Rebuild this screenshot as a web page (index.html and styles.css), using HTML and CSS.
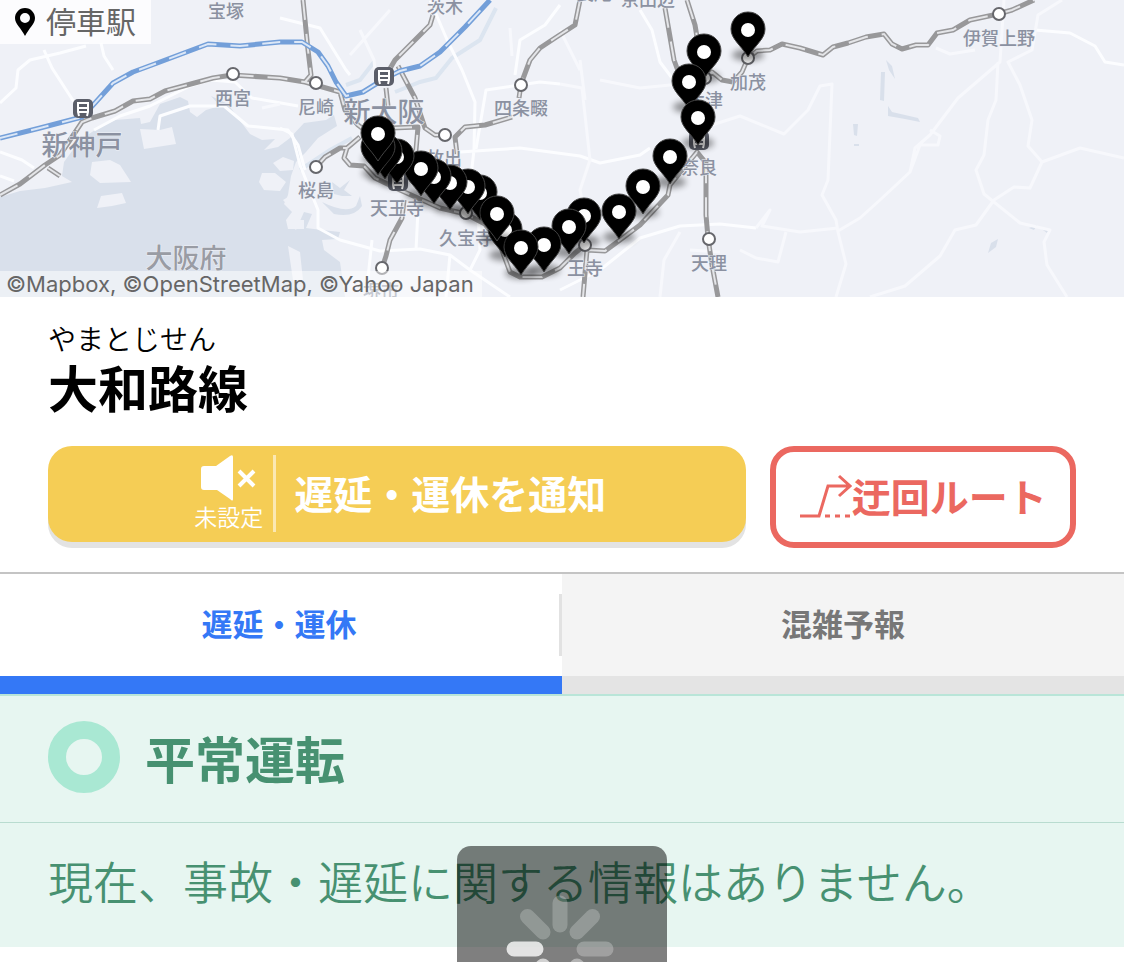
FILE: index.html
```html
<!DOCTYPE html>
<html lang="ja">
<head>
<meta charset="utf-8">
<meta name="viewport" content="width=device-width, initial-scale=1">
<title>大和路線 運行情報</title>
<link rel="stylesheet" href="styles.css">
</head>
<body>
<div class="page">
  <section class="map">
    <svg class="map-canvas" viewBox="0 0 1124 297" preserveAspectRatio="xMidYMid slice" role="img" aria-label="停車駅の地図">
      <defs>
        <filter id="soft" x="-50%" y="-50%" width="200%" height="200%"><feGaussianBlur stdDeviation="3"/></filter>
        <g id="pin">
          <ellipse class="pin-shadow" cx="0" cy="25" rx="16" ry="6"/>
          <path class="pin-body" d="M0-18C-10-18-17-10-17-1C-17 9-8 14 0 27C8 14 17 9 17-1C17-10 10-18 0-18Z"/>
          <circle class="pin-hole" r="7"/>
        </g>
        <circle id="stop" r="6"/>
        <g id="hub">
          <rect class="hub-box" x="-10" y="-10" width="20" height="19" rx="5"/>
          <path class="hub-train" d="M-4 7L-5 3V-6H5V3L4 7M-5-1H5M-5 3H5"/>
        </g>
      </defs>

      <g class="water">
        <path d="M0 197L20 191L45 188L72 182L62 176L64 162L80 140L95 130L115 120L140 118L141 124L150 122L155 113L160 104L180 97L188 101L190 112L197 117L206 110L220 106L211 96L228 104L238 118L250 134L262 140L275 139L264 150L278 147L290 138L304 123L326 120L334 115L337 126L318 138L306 152L296 162L291 176L288 195L284 204L292 212L286 220L296 230L304 212L312 214L306 228L322 230L340 232L338 239L322 240L324 250L340 262L345 297H0Z"/>
        <path d="M332 182L340 188L350 180L344 190L352 196L342 196L334 194ZM322 202Q346 214 356 206L360 196L362 206Q354 218 334 214Z"/>
        <path class="river" d="M346 85L360 80L374 62M395 92L420 82L436 78L452 58L480 40L496 8M300 170L330 150L352 138"/>
        <path d="M886 60L892 66L895 79L889 70ZM881 72L885 72L884 101L880 100ZM888 106L892 112L918 118L920 122L905 119L888 116ZM853 124L858 124L857 136L854 135ZM854 144H859V146H854ZM988 253L991 243L998 239L996 247ZM1029 228L1037 225L1034 230ZM1039 227L1050 231L1047 233Z"/>
      </g>
      <g class="land">
        <path d="M140 129L160 130L172 127L176 144L144 149ZM92 162L110 160L120 165L131 182L100 183L90 175ZM101 196L122 193L126 203L112 206L97 208ZM262 173L275 173L286 182L280 191L264 190L259 182ZM273 163L283 157L294 161L293 170L280 171ZM286 220H304V229L288 229ZM288 246L300 252L303 280H293ZM283 200L300 190L303 210L290 208Z"/>
      </g>

      <g class="road-main">
        <path d="M0 103L16 88L18 70L30 60L60 53L86 46M44 50L52 68L74 102M94 130L120 116L150 106L190 86L210 80L235 82L252 98L298 106M158 130L160 116L190 106L224 106L248 126L288 130L298 145L305 170M101 43L104 56L113 70M0 152L22 160L34 168M0 176L14 181"/>
        <path d="M430 0L448 42L462 70L475 102L474 150L470 185M460 152L520 148L580 156L600 163L640 155L650 148M280 18L320 28L346 70L350 75M560 5L545 25L520 40L515 75M280 128L292 134L300 165L318 210L318 228L340 240L380 251L420 249L450 255L470 270L510 297M640 10L652 30L660 62L675 82M560 290L600 270L640 238L680 226L720 224L756 228"/>
        <path d="M470 270L480 250L476 180M372 240L366 297M418 210L416 250M450 255L446 297M476 149L486 90L540 82L560 84M1124 65L1105 62L1095 46L1070 33L1035 30"/>
      </g>
      <g class="road-minor">
        <path d="M560 84L582 88L590 160L580 190L585 215M600 80L640 88L700 82M712 125L740 116L784 134L808 110L820 86L832 84L828 180L822 195L836 220L838 232L846 264L836 297M756 228L770 210L762 226L800 232L838 228M838 231L860 218L880 200L910 172L915 148L930 135L958 98L1000 62L1004 0M910 172L920 145L938 145L940 136L930 130M998 62L996 100L988 120L984 155L976 170L984 194L1020 223L1050 230L1044 242L1047 265L1067 297M870 297L905 286L940 256L955 230L976 225L994 200L1014 187L1030 188L1042 162L1080 148L1124 158M1042 162L1028 146L1032 120L1020 85L1008 62L1032 50L1038 15L1062 0M936 48L950 54L975 50M740 250L756 258L778 262L786 232M660 297L664 260L680 232M690 250L720 252M560 30L580 70M280 104L262 108M360 30L374 60L376 80M390 10L350 55M510 28L512 56M580 60L585 100"/>
      </g>

      <g class="rail-base">
        <path id="r1" d="M0 195L20 184L45 165L60 155L82 122L92 118L115 111L133 101L150 99L165 91L213 78L232 75L280 78L305 82L340 92L345 110L358 125L375 138M303 0L308 50L311 75L305 82M60 176L48 168M433 15L430 25L415 40L395 60L388 72M386 88L388 106M398 66L415 98L425 128L435 135L445 135M392 128L418 127L416 150L408 165M580 0L575 25L555 38L540 48L530 60L521 84L519 98M512 117L485 125L465 127L455 137L457 154M316 167L325 157L340 148L347 148L360 137M347 148L344 158L350 165L364 166L375 178L400 190L440 208L466 214L485 224L500 245L510 272L520 277L542 277L560 268L575 253L585 245M587 250L605 251L620 240L640 225L668 195L670 185L697 152L706 163L706 215L708 238L712 265L718 297M587 250L583 297M404 200L402 218L390 240L386 256L382 268M665 8L674 60L685 90M687 0L695 25L700 55M706 77L712 72L722 80L733 82L742 72L748 58L757 51L770 50L782 44L800 48L823 55L833 47L848 43L866 37L884 34L892 44L902 49L916 45L928 45L937 33L953 30L970 20L998 14L1012 10L1034 0"/>
      </g>
      <use class="rail-dash" href="#r1"/>
      <path class="bullet-base" d="M0 138L40 128L82 117L95 103L113 83L133 72L160 62L208 44L240 46L280 42L302 42L318 52L328 66L336 82L346 96L363 92L384 79L400 71L420 66L440 52L465 27L490 0"/>
      <path class="bullet-dash" d="M0 138L40 128L82 117L95 103L113 83L133 72L160 62L208 44L240 46L280 42L302 42L318 52L328 66L336 82L346 96L363 92L384 79L400 71L420 66L440 52L465 27L490 0"/>

      <g class="stops">
        <use href="#stop" x="233" y="74"/><use href="#stop" x="316" y="83"/><use href="#stop" x="521" y="85"/>
        <use href="#stop" x="445" y="135"/><use href="#stop" x="316" y="167"/><use href="#stop" x="382" y="268"/>
        <use href="#stop" x="466" y="213"/><use href="#stop" x="585" y="245"/><use href="#stop" x="709" y="239"/>
        <use href="#stop" x="748" y="58"/><use href="#stop" x="705" y="78"/><use href="#stop" x="999" y="14"/>
      </g>
      <use href="#hub" x="83" y="109"/><use href="#hub" x="384" y="77"/><use href="#hub" x="398" y="182"/><use href="#hub" x="699" y="141"/>

      <g class="place">
        <text x="226" y="18">宝塚</text><text x="233" y="105">西宮</text><text x="316" y="114">尼崎</text>
        <text x="521" y="115">四条畷</text><text x="444" y="165">放出</text><text x="316" y="197">桜島</text>
        <text x="397" y="215">天王寺</text><text x="466" y="245">久宝寺</text><text x="445" y="13">茨木</text>
        <text x="648" y="6">京田辺</text><text x="594" y="0">長尾</text><text x="748" y="89">加茂</text>
        <text x="705" y="107">木津</text><text x="699" y="174">奈良</text><text x="709" y="270">天理</text>
        <text x="585" y="275">王寺</text><text x="999" y="45">伊賀上野</text><text x="381" y="298">堺市</text>
      </g>
      <g class="place place-large">
        <text x="82" y="155">新神戸</text><text x="384" y="122">新大阪</text><text class="place-area" x="186" y="268">大阪府</text>
      </g>

      <g class="pins">
        <use href="#pin" x="748" y="30"/><use href="#pin" x="704" y="52"/><use href="#pin" x="689" y="82"/>
        <use href="#pin" x="698" y="118"/><use href="#pin" x="670" y="157"/><use href="#pin" x="643" y="187"/>
        <use href="#pin" x="619" y="212"/><use href="#pin" x="584" y="216"/><use href="#pin" x="569" y="227"/>
        <use href="#pin" x="505" y="230"/><use href="#pin" x="544" y="245"/><use href="#pin" x="521" y="248"/>
        <use href="#pin" x="480" y="193"/><use href="#pin" x="497" y="214"/><use href="#pin" x="468" y="187"/>
        <use href="#pin" x="450" y="183"/><use href="#pin" x="434" y="177"/><use href="#pin" x="421" y="169"/>
        <use href="#pin" x="397" y="157"/><use href="#pin" x="385" y="152"/><use href="#pin" x="378" y="148"/>
        <use href="#pin" x="378" y="134"/>
      </g>
    </svg>
    <div class="map-tag">
      <svg class="map-tag-icon" viewBox="0 0 20 28" aria-hidden="true"><path fill-rule="evenodd" d="M10 0C4 0 0 5 0 10C0 16 6 20 10 28C14 20 20 16 20 10C20 5 16 0 10 0ZM10 5A5 5 0 1 1 10 15A5 5 0 1 1 10 5Z"/></svg>
      <span>停車駅</span>
    </div>
    <div class="map-credit">©Mapbox, ©OpenStreetMap, ©Yahoo Japan</div>
  </section>

  <header class="line-head">
    <p class="line-kana">やまとじせん</p>
    <h1 class="line-name">大和路線</h1>
    <div class="actions">
      <button class="btn-notify" type="button">
        <span class="notify-state">
          <svg class="notify-icon" viewBox="0 0 56 46" aria-hidden="true"><path class="speaker" d="M3 11H15L29 1Q32-1 32 2V44Q32 47 29 44L16 35H3Q0 35 0 32V14Q0 11 3 11Z"/><path class="mute" d="M38 16L53 31M53 16L38 31"/></svg>
          <span>未設定</span>
        </span>
        <span class="notify-label">遅延・運休を通知</span>
      </button>
      <button class="btn-detour" type="button">
        <svg class="detour-icon" viewBox="0 0 52 46" aria-hidden="true"><path d="M0 42H19L28 12H49M39 2L50 12L39 22"/><path class="detour-dots" d="M25 42H50"/></svg>
        <span>迂回ルート</span>
      </button>
    </div>
  </header>

  <nav class="tabs" role="tablist">
    <button class="tab tab-active" type="button" role="tab" aria-selected="true">遅延・運休</button>
    <button class="tab" type="button" role="tab" aria-selected="false">混雑予報</button>
  </nav>

  <main class="status">
    <h2 class="status-title"><span class="status-ring"></span>平常運転</h2>
    <p class="status-text">現在、事故・遅延に関する情報はありません。</p>
    <div class="loading" role="status" aria-label="読み込み中">
      <svg class="spinner" viewBox="0 0 210 210" aria-hidden="true">
        <g transform="translate(103 103)">
          <path d="M0-24V-46" opacity=".22"/>
          <path d="M0-24V-46" opacity=".23" transform="rotate(45)"/>
          <path d="M0-24V-46" opacity=".26" transform="rotate(90)"/>
          <path d="M0-24V-46" opacity=".4" transform="rotate(135)"/>
          <path d="M0-24V-46" opacity=".5" transform="rotate(180)"/>
          <path d="M0-24V-46" opacity=".65" transform="rotate(225)"/>
          <path d="M0-24V-46" opacity=".78" transform="rotate(270)"/>
          <path d="M0-24V-46" opacity=".22" transform="rotate(315)"/>
        </g>
      </svg>
    </div>
  </main>
</div>
</body>
</html>
```
FILE: styles.css
```css
* { box-sizing: border-box; }

body {
  margin: 0;
  background: #fff;
  color: #000;
  font-family: "Noto Sans CJK JP", sans-serif;
}

button {
  font-family: inherit;
  cursor: pointer;
}

.page {
  height: 100vh;
  overflow: hidden;
}

/* Map */
.map {
  position: relative;
  height: 297px;
  overflow: hidden;
  background: #eff1f7;
}
.map-canvas {
  display: block;
  width: 100%;
  height: 100%;
}
.water { fill: #d9e0eb; }
.river { fill: none; stroke: #dce5f0; stroke-width: 4; }
.land { fill: #eff1f7; }
.road-main, .road-minor {
  fill: none;
  stroke: #fcfdff;
  stroke-width: 3;
  stroke-linejoin: round;
}
.road-minor { stroke: #f7f8fc; }
.rail-base, .rail-dash, .bullet-base, .bullet-dash { fill: none; }
.rail-base { stroke: #98989a; stroke-width: 5; stroke-linejoin: round; }
.rail-dash { stroke: #e4e5e8; stroke-width: 2; stroke-dasharray: 20 14; }
.bullet-base { stroke: #739fd9; stroke-width: 5; stroke-linejoin: round; }
.bullet-dash { stroke: #dbe7f7; stroke-width: 2; stroke-dasharray: 18 14; }
.stops { fill: #fff; stroke: #66676c; stroke-width: 2; }
.hub-box { fill: #5b5e69; }
.hub-train { fill: none; stroke: #fff; stroke-width: 2; }
.place {
  fill: #8b91a1;
  font-size: 18px;
  font-weight: 500;
  text-anchor: middle;
  paint-order: stroke;
  stroke: #eff1f7;
  stroke-width: 1;
}
.place-large { font-size: 27px; }
.place-area { fill: #999ca4; }
.pin-shadow { fill: #000; opacity: .4; filter: url(#soft); }
.pin-body { fill: #000; stroke: #444; stroke-width: 1; }
.pin-hole { fill: #fff; }

.map-tag {
  position: absolute;
  top: 0;
  left: 0;
  display: flex;
  align-items: center;
  gap: 11px;
  height: 44px;
  padding: 0 15px;
  background: rgba(255, 255, 255, .8);
  color: #666;
  font-size: 30px;
  line-height: 40px;
}
.map-tag span { padding-bottom: 4px; }
.map-tag-icon { width: 20px; height: 28px; fill: #000; }
.map-credit {
  position: absolute;
  bottom: 0;
  left: 0;
  padding: 0 8px 0 6px;
  background: rgba(255, 255, 255, .5);
  color: #666;
  font-family: Inter, sans-serif;
  font-size: 22px;
  line-height: 26px;
}

/* Line heading */
.line-head { padding: 23px 48px 24px; }
.line-kana {
  margin: 0;
  font-size: 28px;
  font-weight: 350;
  line-height: 36px;
}
.line-name {
  margin: 0;
  font-size: 50px;
  font-weight: 700;
  line-height: 60px;
}
.actions {
  display: grid;
  grid-template-columns: 16fr 7fr;
  gap: 24px;
  margin-top: 30px;
}
.btn-notify {
  display: flex;
  align-items: center;
  justify-content: center;
  height: 96px;
  padding: 0 0 2px 6px;
  border: 0;
  border-radius: 24px;
  background: #f5cd55;
  box-shadow: 0 6px 0 #e3e3e3;
  color: #fff;
}
.notify-state {
  display: flex;
  flex-direction: column;
  align-items: center;
  padding-right: 10px;
  border-right: 3px solid #fbe8b3;
  font-size: 23px;
  font-weight: 350;
  line-height: 31px;
}
.notify-icon { width: 56px; height: 46px; fill: #fff; }
.mute { fill: none; stroke: #fff; stroke-width: 4; }
.notify-label {
  padding-bottom: 2px;
  padding-left: 18px;
  font-size: 39px;
  font-weight: 700;
  line-height: 56px;
}
.btn-detour {
  display: flex;
  align-items: center;
  justify-content: center;
  height: 102px;
  padding: 0;
  border: 6px solid #eb6860;
  border-radius: 24px;
  background: #fff;
  color: #eb6860;
  font-size: 39px;
  font-weight: 700;
  line-height: 56px;
}
.btn-detour span { padding-bottom: 4px; }
.detour-icon {
  width: 52px;
  height: 46px;
  fill: none;
  stroke: #eb6860;
  stroke-width: 3;
}
.detour-dots { stroke-dasharray: 5 5; }

/* Tabs */
.tabs {
  display: grid;
  grid-template-columns: 1fr 1fr;
  border-top: 2px solid #c4c4c4;
}
.tab {
  height: 120px;
  padding: 0 0 6px;
  border: 0;
  border-bottom: 18px solid #e4e4e4;
  background: #f4f4f4;
  color: #777;
  font-size: 31px;
  font-weight: 700;
}
.tab-active {
  padding-right: 4px;
  border-bottom-color: #3478f6;
  background: linear-gradient(#e2e2e2, #e2e2e2) right center / 3px 62px no-repeat #fff;
  color: #3478f6;
}

/* Service status */
.status {
  position: relative;
  border-top: 2px solid #b9e5d8;
  background: #e7f6f1;
  color: #479171;
}
.status-title {
  display: flex;
  align-items: center;
  gap: 25px;
  margin: 0;
  padding: 25px 48px 29px;
  border-bottom: 1px solid #b9dcd0;
  font-size: 50px;
  font-weight: 700;
  line-height: 72px;
}
.status-ring {
  width: 72px;
  height: 72px;
  border: 18px solid #a9e8d3;
  border-radius: 50%;
}
.status-text {
  margin: 0;
  padding: 26px 48px 34px;
  font-size: 45px;
  font-weight: 350;
  line-height: 64px;
}
.loading {
  position: absolute;
  top: 150px;
  left: 50%;
  width: 210px;
  height: 210px;
  margin-left: -105px;
  border-radius: 14px;
  background: rgba(0, 0, 0, .5);
}
.spinner {
  display: block;
  width: 210px;
  height: 210px;
  fill: none;
  stroke: #fff;
  stroke-width: 15;
  stroke-linecap: round;
}
```
